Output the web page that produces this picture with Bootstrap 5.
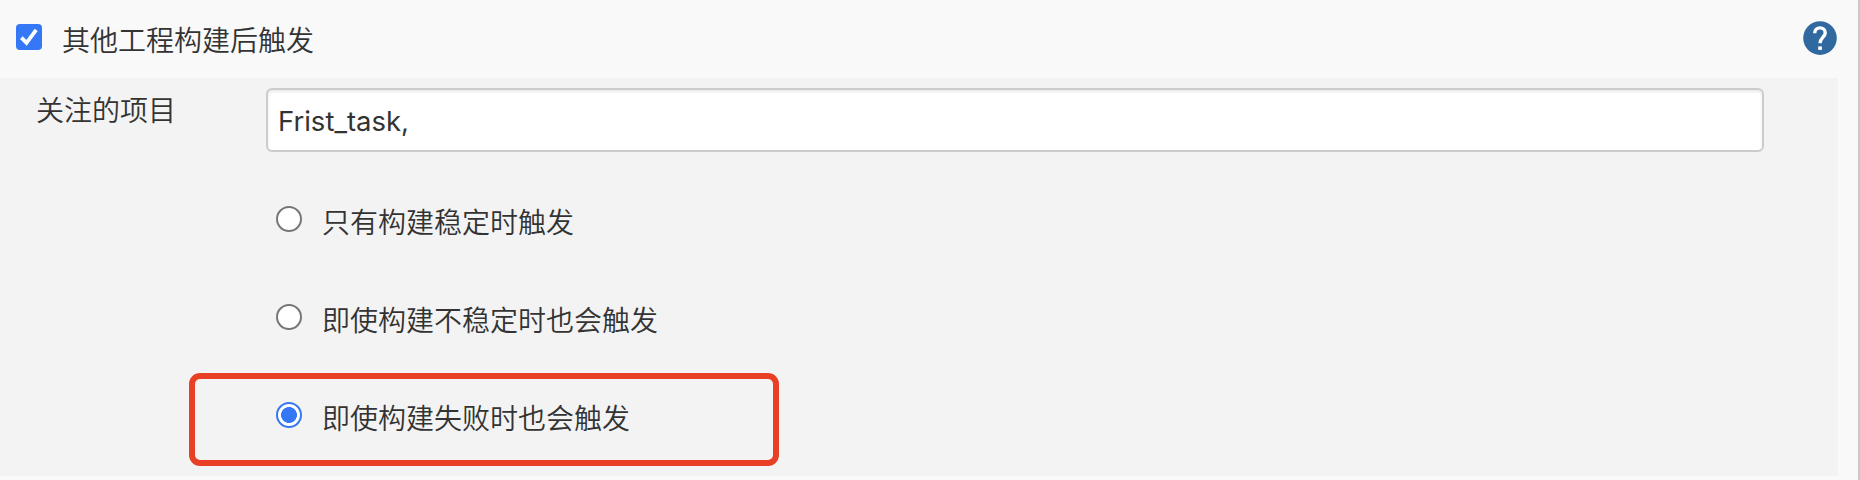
<!DOCTYPE html>
<html lang="zh-CN">
<head>
<meta charset="utf-8">
<meta name="viewport" content="width=device-width, initial-scale=1">
<title>构建触发器</title>
<link rel="stylesheet" href="https://cdn.jsdelivr.net/npm/bootstrap@5.3.0/dist/css/bootstrap.min.css">
<style>
body{background:#f9f9f9;color:#333;font:350 28px/42px "Noto Sans CJK SC",sans-serif;overflow:hidden}
.config{height:480px;border-right:2px solid #c8c8c8}
.trigger-head{height:78px;padding:16px 21px 0 16px}
.trigger-name{margin:2px 0 0 20px}
.help-icon{margin-top:5px}
.panel{width:1838px;height:398px;background:#f3f3f3;padding-top:10px}
.field-name{width:266px;padding-left:36px;line-height:42px}
.choice{height:42px;gap:20px}
.choice span{padding-top:1px}
.choice .form-check-input,.trigger-head .form-check-input{width:26px;height:26px;margin:0;border:2px solid #767676;background-color:#fff;box-shadow:none}
.trigger-head .form-check-input{margin-top:8px;border:0;border-radius:4px;background-color:#3478f6;background-size:26px;background-image:url("data:image/svg+xml,%3Csvg xmlns='http://www.w3.org/2000/svg' viewBox='0 0 26 26'%3E%3Cpath d='M5.4 13.6l5.1 5.2L20.2 5.8' fill='none' stroke='white' stroke-width='3.8'/%3E%3C/svg%3E")}
.choice .form-check-input{margin-top:7px}
.choice .form-check-input:checked{border-color:#3478f6;background-image:radial-gradient(circle,#3478f6 0 7.6px,#fff 8.3px)}
.projects{width:1498px;height:64px;border:2px solid #ccc;border-radius:6px;padding:2px 10px 1px;color:#333;font:27.5px "Inter","Noto Sans CJK SC",sans-serif;box-shadow:inset 0 2px 3px rgba(0,0,0,.09)}
.options{padding:47px 0 0 276px;gap:56px}
.marked{left:-87px;top:-22px;width:590px;height:93px;border:6px solid #e83f25;border-radius:11px;pointer-events:none}
</style>
</head>
<body>
<main class="config">
  <div class="trigger-head d-flex justify-content-between">
    <label class="d-flex">
      <input class="form-check-input flex-shrink-0" type="checkbox" checked>
      <span class="trigger-name">其他工程构建后触发</span>
    </label>
    <svg class="help-icon flex-shrink-0" width="34" height="34" viewBox="0 0 34 34" role="img" aria-label="帮助">
      <circle cx="17" cy="17.1" r="16.8" fill="#30699f"/>
      <path d="M11.7 12.2C11.7 8.8 14.1 6.9 17 6.9C20 6.9 22.2 9 22.2 11.9C22.2 15.7 17.1 16.8 17.1 22.2" fill="none" stroke="#fff" stroke-width="3.4"/>
      <path d="M15.2 25.4h3.7v3.5h-3.7z" fill="#fff"/>
    </svg>
  </div>
  <section class="panel">
    <div class="d-flex">
      <label class="field-name flex-shrink-0" for="projects">关注的项目</label>
      <input class="form-control projects" id="projects" type="text" value="Frist_task,">
    </div>
    <div class="options d-flex flex-column align-items-start">
      <label class="choice d-flex"><input class="form-check-input flex-shrink-0" type="radio" name="threshold"><span>只有构建稳定时触发</span></label>
      <label class="choice d-flex"><input class="form-check-input flex-shrink-0" type="radio" name="threshold"><span>即使构建不稳定时也会触发</span></label>
      <label class="choice d-flex position-relative"><input class="form-check-input flex-shrink-0" type="radio" name="threshold" checked><span>即使构建失败时也会触发</span><i class="marked position-absolute"></i></label>
    </div>
  </section>
</main>
<script src="https://cdn.jsdelivr.net/npm/bootstrap@5.3.0/dist/js/bootstrap.bundle.min.js"></script>
</body>
</html>
